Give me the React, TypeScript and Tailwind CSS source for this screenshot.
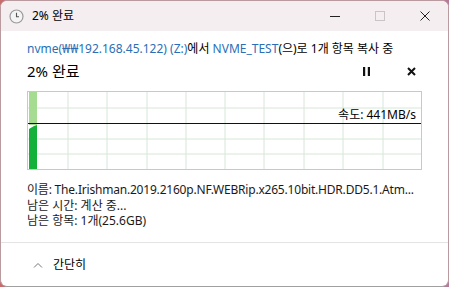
import React from "react";

const font = { fontFamily: '"Noto Sans", "Noto Sans CJK KR", sans-serif' };

const ClockIcon = () => (
  <svg width="15" height="15" viewBox="0 0 15 15">
    <circle cx="7.5" cy="7.5" r="6.5" fill="#f4f4f4" stroke="#9a9a9a" strokeWidth="1.2" />
    <path d="M7.5 3.8V7.8H10" fill="none" stroke="#555" strokeWidth="1.1" />
  </svg>
);

const Graph = () => {
  const cols = [67, 106, 146, 185, 224, 263, 303, 342, 382].map((x) => x - 27);
  const rows = [16, 47, 62];
  return (
    <div className="relative h-[79px] border border-[#c8c8c8] bg-white">
      <svg className="absolute inset-0" width="100%" height="100%">
        {cols.map((x) => (
          <line key={x} x1={x} y1="0" x2={x} y2="79" stroke="#d7e6da" strokeWidth="1" />
        ))}
        {rows.map((y) => (
          <line key={y} x1="0" y1={y} x2="400" y2={y} stroke="#d7e6da" strokeWidth="1" />
        ))}
        <rect x="1" y="0" width="8" height="33" fill="#a6dc92" />
        <polygon points="1,37 6,34 9,33 9,79 1,79" fill="#13b03a" />
        <line x1="0" y1="31.5" x2="400" y2="31.5" stroke="#111" strokeWidth="1.2" />
      </svg>
      <span className="absolute right-[5px] top-[17px] text-[12px] leading-none text-black">
        속도: 441MB/s
      </span>
    </div>
  );
};

export default function App() {
  return (
    <div
      className="h-[287px] w-[449px] bg-[linear-gradient(90deg,#c96b6c,#b57a98)] text-black"
      style={font}
    >
      <div className="flex h-full flex-col overflow-hidden rounded-[7px] border border-[#b99a9e] border-b-[#a0a0a0] bg-white">
        <div className="flex h-[30px] items-center bg-[#f4eef0]">
          <div className="ml-[8px]">
            <ClockIcon />
          </div>
          <span className="ml-[8px] text-[12px]">2% 완료</span>
          <div className="ml-auto flex h-full items-center">
            <div className="flex h-full w-[45px] items-center justify-center">
              <div className="h-px w-[10px] bg-[#222]" />
            </div>
            <div className="flex h-full w-[45px] items-center justify-center">
              <div className="h-[10px] w-[10px] border border-[#c9c4c6]" />
            </div>
            <div className="flex h-full w-[46px] items-center justify-center">
              <svg width="10" height="10" viewBox="0 0 10 10">
                <path d="M0.5 0.5L9.5 9.5M9.5 0.5L0.5 9.5" stroke="#222" strokeWidth="1" />
              </svg>
            </div>
          </div>
        </div>

        <div className="flex flex-1 flex-col pl-[26px] pr-[26px]">
          <p className="mt-[10px] whitespace-nowrap text-[12px] leading-[16px]">
            <span className="text-[#2a6fb5]">nvme(₩₩192.168.45.122) (Z:)</span>에서{" "}
            <span className="text-[#2a6fb5]">NVME_TEST</span>(으)로 1개 항목 복사 중
          </p>
          <div className="mt-[4px] flex items-center">
            <span className="text-[15px] leading-[20px]">2% 완료</span>
            <div className="ml-auto flex items-center gap-[37px] pr-[6px]">
              <svg width="7" height="9" viewBox="0 0 7 9">
                <rect x="0" y="0" width="2.2" height="9" fill="#111" />
                <rect x="4.8" y="0" width="2.2" height="9" fill="#111" />
              </svg>
              <svg width="9" height="9" viewBox="0 0 9 9">
                <path d="M1 1L8 8M8 1L1 8" stroke="#111" strokeWidth="2" />
              </svg>
            </div>
          </div>
          <div className="mt-[10px]">
            <Graph />
          </div>
          <div className="mt-[12px] text-[12px] leading-[15.5px] text-[#1a1a1a]">
            <p className="whitespace-nowrap tracking-[-0.2px]">
              이름: The.Irishman.2019.2160p.NF.WEBRip.x265.10bit.HDR.DD5.1.Atm...
            </p>
            <p>남은 시간: 계산 중...</p>
            <p>남은 항목: 1개(25.6GB)</p>
          </div>
        </div>

        <div className="flex h-[44px] items-center border-t border-[#e3e3e3] pl-[32px]">
          <svg width="10" height="6" viewBox="0 0 10 6">
            <path d="M1 5.5L5 1.5L9 5.5" fill="none" stroke="#777" strokeWidth="1" />
          </svg>
          <span className="ml-[10px] text-[12px]">간단히</span>
        </div>
      </div>
    </div>
  );
}
